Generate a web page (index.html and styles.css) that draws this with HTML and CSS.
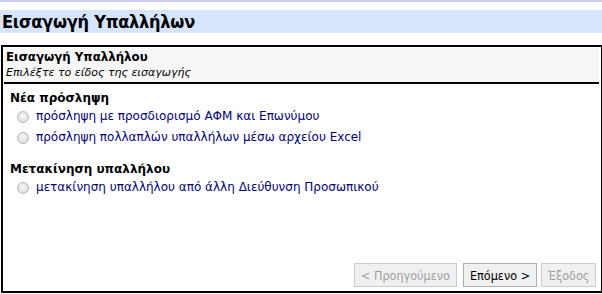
FILE: index.html
```html
<!DOCTYPE html>
<html lang="el">
<head>
<meta charset="utf-8">
<title>Εισαγωγή Υπαλλήλων</title>
<link rel="stylesheet" href="styles.css">
</head>
<body>
<div class="topbar"></div>
<h1 class="page-title">Εισαγωγή Υπαλλήλων</h1>
<div class="wizard">
  <div class="wizard-head">
    <div class="wizard-title">Εισαγωγή Υπαλλήλου</div>
    <div class="wizard-sub">Επιλέξτε το είδος της εισαγωγής</div>
  </div>
  <div class="wizard-body">
    <div class="group">
      <div class="group-title">Νέα πρόσληψη</div>
      <label class="opt"><span class="radio"></span>πρόσληψη με προσδιορισμό ΑΦΜ και Επωνύμου</label>
      <label class="opt"><span class="radio"></span>πρόσληψη πολλαπλών υπαλλήλων μέσω αρχείου Excel</label>
    </div>
    <div class="group">
      <div class="group-title">Μετακίνηση υπαλλήλου</div>
      <label class="opt"><span class="radio"></span>μετακίνηση υπαλλήλου από άλλη Διεύθυνση Προσωπικού</label>
    </div>
  </div>
  <div class="wizard-foot">
    <button class="btn btn-prev" disabled>&lt; Προηγούμενο</button>
    <button class="btn btn-next">Επόμενο &gt;</button>
    <button class="btn btn-exit" disabled>Έξοδος</button>
  </div>
</div>
</body>
</html>
```
FILE: styles.css
```css
html, body {
  margin: 0;
  padding: 0;
  background: #fff;
  font-family: "DejaVu Sans", Verdana, sans-serif;
  color: #000;
}
.topbar {
  height: 2px;
  background: #ccccf5;
}
.page-title {
  margin: 8px 0 0 0;
  height: 23px;
  line-height: 24px;
  background: #d6e4fc;
  font-family: "DejaVu Sans Condensed", "DejaVu Sans", sans-serif;
  font-size: 18px;
  font-weight: bold;
  letter-spacing: -0.25px;
  padding-left: 2px;
  color: #000;
}
.wizard {
  margin: 12px 1px 0 1px;
  width: 596px;
  height: 242px;
  border: 2px solid #000;
  padding: 1px;
  display: flex;
  flex-direction: column;
}
.wizard-head {
  background: #f7f7f7;
  border-bottom: 2px solid #000;
  padding: 2px 2px 2px 2px;
  margin-right: 1px;
}
.wizard-title {
  font-size: 11.8px;
  font-weight: bold;
  line-height: 15px;
}
.wizard-sub {
  font-size: 11px;
  font-style: italic;
  line-height: 15px;
}
.wizard-body {
  flex: 1;
  padding: 7px 6px 0 6px;
}
.group {
  margin-bottom: 14px;
}
.group-title {
  font-size: 12px;
  font-weight: bold;
  line-height: 15px;
}
.opt {
  display: flex;
  align-items: center;
  font-size: 12px;
  line-height: 21px;
  color: #000080;
  margin-left: 7px;
}
.radio {
  width: 12px;
  height: 12px;
  border-radius: 50%;
  border: 1px solid #b8b8b8;
  background: radial-gradient(circle at 50% 40%, #f6f6f6, #d8d8d8);
  margin-right: 7px;
  box-sizing: border-box;
}
.wizard-foot {
  display: flex;
  justify-content: flex-end;
  gap: 4px;
  padding: 0 4px 3px 0;
}
.btn {
  font-family: "DejaVu Sans Condensed", "DejaVu Sans", sans-serif;
  font-size: 12.5px;
  height: 24px;
  padding: 0;
  background: #f0f0f0;
  border: 1px solid #adadad;
  color: #000;
}
.btn-prev { width: 103px; margin-right: 2px; }
.btn-next { width: 74px; }
.btn-exit { width: 55px; }
.btn:disabled {
  color: #a0a0a0;
  border-color: #cccccc;
}
```
